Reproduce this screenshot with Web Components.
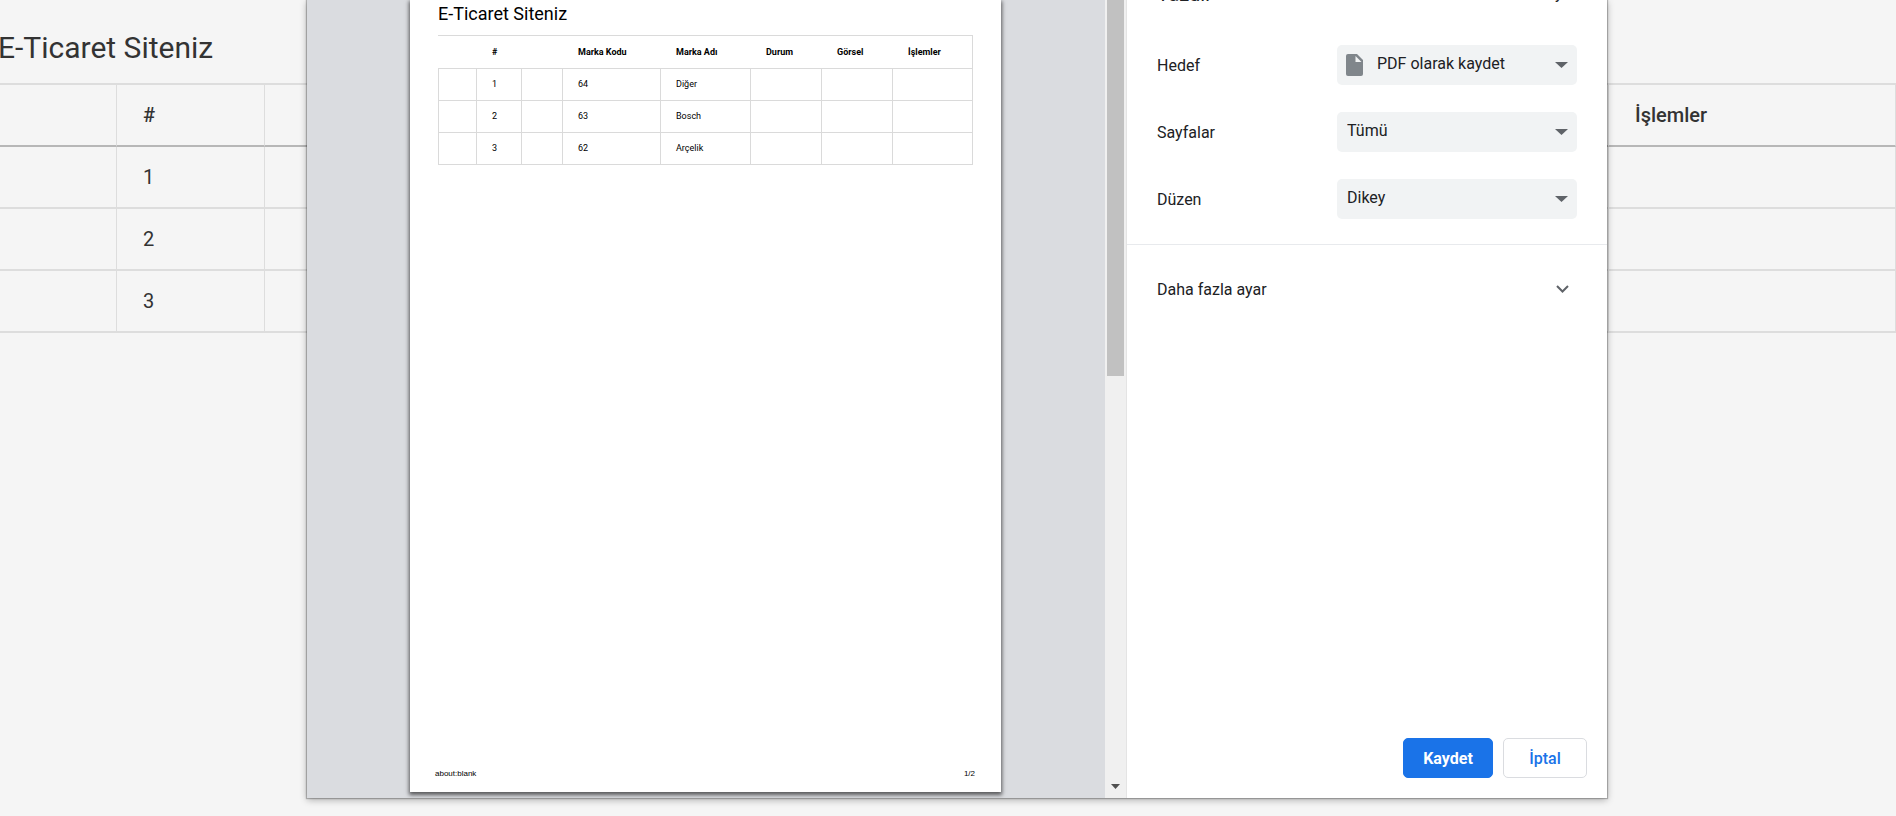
<!DOCTYPE html>
<html lang="tr">
<head>
<meta charset="utf-8">
<title>E-Ticaret Siteniz</title>
<style>
  html, body { margin: 0; height: 100%; overflow: hidden; }
  body { background: #f5f5f5; color: #333; font-family: Roboto, "Liberation Sans", sans-serif; }
</style>
</head>
<body>
<brand-app></brand-app>

<template id="t-app">
  <style>
    :host { display: grid; height: 100vh; overflow: hidden; }
    brand-list, print-dialog { grid-area: 1 / 1; min-width: 0; }
    print-dialog { margin: 0 289px 18px 307px; z-index: 1; }
  </style>
  <brand-list></brand-list>
  <print-dialog>
    <print-preview slot="preview"></print-preview>
    <print-settings slot="settings"></print-settings>
  </print-dialog>
</template>

<template id="t-list">
  <style>
    :host { display: block; }
    h1 { margin: 0 0 0 -2px; padding: 28px 0 15px; font-size: 30px; line-height: 40px; font-weight: 400; }
    table { width: 100%; table-layout: fixed; border-spacing: 0; font-size: 20px; line-height: 24px; }
    th, td { box-sizing: border-box; height: 62px; padding: 0 26px; text-align: left;
      border-right: 1px solid #ddd; border-bottom: 2px solid #ddd; }
    th { height: 64px; font-weight: 500; border-top: 2px solid #ddd; border-bottom-color: #b7b7b7; }
    .select { width: 117px; } .no { width: 148px; } .actions { width: 287px; }
  </style>
  <h1>E-Ticaret Siteniz</h1>
  <table>
    <colgroup><col class="select"><col class="no"><col><col class="actions"></colgroup>
    <thead><tr><th></th><th>#</th><th></th><th>İşlemler</th></tr></thead>
    <tbody>
      <tr><td></td><td>1</td><td></td><td></td></tr>
      <tr><td></td><td>2</td><td></td><td></td></tr>
      <tr><td></td><td>3</td><td></td><td></td></tr>
    </tbody>
  </table>
</template>

<template id="t-dialog">
  <style>
    :host { display: grid; grid-template-columns: minmax(0, 1fr) 481px; background: #fff; color: #202124;
      box-shadow: 0 0 1px 1px rgba(0,0,0,.24), 0 2px 7px rgba(0,0,0,.3); }
    ::slotted(*) { min-height: 0; }
  </style>
  <slot name="preview"></slot>
  <slot name="settings"></slot>
</template>

<template id="t-preview">
  <style>
    :host { display: grid; grid-template-columns: minmax(0, 1fr) 21px; background: #dadce0; overflow: hidden; }
    .page { display: flex; flex-direction: column; justify-content: space-between; margin: 0 104px 6px 103px;
      box-sizing: border-box; padding: 0 28px 12px; background: #fff; color: #000;
      box-shadow: 0 2px 4px 1px rgba(0,0,0,.6); }
    h2 { margin: 0; font-size: 18px; line-height: 28px; font-weight: 400; padding-bottom: 7px; }
    table { width: 100%; table-layout: fixed; border-spacing: 0; font-size: 9px; line-height: 12px; }
    th, td { box-sizing: border-box; height: 32px; padding: 0 0 0 15px; text-align: left;
      border-right: 1px solid #dadada; border-bottom: 1px solid #dadada; }
    td { padding-bottom: 1px; }
    td:first-child { border-left: 1px solid #dadada; }
    th { height: 34px; font-weight: 700; border-top: 1px solid #dadada; border-right: 0; }
    th:last-child { border-right: 1px solid #dadada; }
    .c1 { width: 39px; } .c2 { width: 45px; } .c3 { width: 41px; } .c4 { width: 98px; }
    .c5 { width: 90px; } .c6, .c7 { width: 71px; }
    footer { display: flex; justify-content: space-between; margin: 0 -2px 0 -3px;
      font: 8px/12px "Liberation Sans", Arial, sans-serif; }
  </style>
  <div class="page">
    <section>
      <h2>E-Ticaret Siteniz</h2>
      <table>
        <colgroup><col class="c1"><col class="c2"><col class="c3"><col class="c4"><col class="c5"><col class="c6"><col class="c7"><col></colgroup>
        <thead><tr><th></th><th>#</th><th></th><th>Marka Kodu</th><th>Marka Adı</th><th>Durum</th><th>Görsel</th><th>İşlemler</th></tr></thead>
        <tbody>
          <tr><td></td><td>1</td><td></td><td>64</td><td>Diğer</td><td></td><td></td><td></td></tr>
          <tr><td></td><td>2</td><td></td><td>63</td><td>Bosch</td><td></td><td></td><td></td></tr>
          <tr><td></td><td>3</td><td></td><td>62</td><td>Arçelik</td><td></td><td></td><td></td></tr>
        </tbody>
      </table>
    </section>
    <footer><span>about:blank</span><span>1/2</span></footer>
  </div>
  <scroll-rail></scroll-rail>
</template>

<template id="t-rail">
  <style>
    :host { display: flex; flex-direction: column; justify-content: space-between; align-items: center;
      background: #f0f0f0; padding-bottom: 9px; }
    .thumb { width: 17px; height: 376px; background: #c1c1c1; }
    svg { display: block; }
  </style>
  <div class="thumb"></div>
  <svg width="9" height="5" viewBox="0 0 9 5"><path d="M0 0h9L4.5 5z" fill="#505050"/></svg>
</template>

<template id="t-settings">
  <style>
    :host { display: flex; flex-direction: column; border-left: 1px solid #e4e4e4; background: #fff; font-size: 16px; overflow: hidden; }
    header { display: flex; justify-content: space-between; align-items: center; height: 24px; margin: -18px 30px 39px; line-height: 20px; }
    h2 { margin: 0; font-size: 20px; line-height: 24px; font-weight: 400; }
    .fields { display: grid; gap: 27px; padding: 0 30px 25px; border-bottom: 1px solid #e8eaed; }
    .more { display: flex; justify-content: space-between; align-items: center; height: 88px; padding: 0 38px 0 30px;
      border: 0; background: none; font: inherit; color: inherit; }
    footer { display: flex; justify-content: flex-end; gap: 10px; margin-top: auto; padding: 20px; }
  </style>
  <header><h2>Yazdır</h2><span>2 sayfa</span></header>
  <div class="fields">
    <print-field label="Hedef" value="PDF olarak kaydet" icon></print-field>
    <print-field label="Sayfalar" value="Tümü"></print-field>
    <print-field label="Düzen" value="Dikey"></print-field>
  </div>
  <button class="more" type="button">Daha fazla ayar
    <svg width="13" height="9" viewBox="0 0 13 9"><path d="M1 1l5.500 5.500L12 1" fill="none" stroke="#5f6368" stroke-width="2"/></svg>
  </button>
  <footer>
    <dialog-button primary>Kaydet</dialog-button>
    <dialog-button>İptal</dialog-button>
  </footer>
</template>

<template id="t-field">
  <style>
    :host { display: grid; grid-template-columns: minmax(0, 1fr) 240px; align-items: center; }
    .box { display: grid; align-items: center; }
    .box > * { grid-area: 1 / 1; }
    select { appearance: none; width: 100%; height: 40px; margin: 0; border: 0; border-radius: 5px; padding: 0 30px 3px 10px;
      background: #f1f3f4; color: inherit; font: inherit; }
    :host([icon]) select { padding-left: 40px; }
    svg { pointer-events: none; z-index: 1; }
    .arrow { justify-self: end; margin-right: 9px; }
    .doc { display: none; margin-left: 9px; }
    :host([icon]) .doc { display: block; }
  </style>
  <label for="choice"></label>
  <div class="box">
    <select id="choice"><option></option></select>
    <svg class="doc" width="17" height="22" viewBox="0 0 17 22"><path d="M2 0h9l6 6v14a2 2 0 0 1-2 2H2a2 2 0 0 1-2-2V2a2 2 0 0 1 2-2z" fill="#80868b"/><path d="M9.500 2v6H15.500z" fill="#f1f3f4"/></svg>
    <svg class="arrow" width="13" height="6" viewBox="0 0 13 6"><path d="M0 0h13L6.500 6z" fill="#5f6368"/></svg>
  </div>
</template>

<template id="t-button">
  <style>
    :host { display: block; }
    button { box-sizing: border-box; min-width: 84px; height: 40px; padding: 0 18px; border: 1px solid #dadce0; border-radius: 5px;
      background: #fff; color: #1a73e8; font: inherit; font-weight: 500; }
    :host([primary]) button { min-width: 90px; border-color: #1a73e8; background: #1a73e8; color: #fff; font-weight: 700; }
  </style>
  <button type="button"><slot></slot></button>
</template>

<script>
  class TemplateElement extends HTMLElement {
    constructor() {
      super();
      const source = document.getElementById(this.constructor.template);
      this.attachShadow({ mode: "open" }).append(document.importNode(source.content, true));
    }
  }
  class PrintField extends TemplateElement {
    static template = "t-field";
    connectedCallback() {
      this.shadowRoot.querySelector("label").textContent = this.getAttribute("label");
      this.shadowRoot.querySelector("option").textContent = this.getAttribute("value");
    }
  }
  customElements.define("print-field", PrintField);
  customElements.define("dialog-button", class extends TemplateElement { static template = "t-button"; });
  customElements.define("scroll-rail", class extends TemplateElement { static template = "t-rail"; });
  customElements.define("print-settings", class extends TemplateElement { static template = "t-settings"; });
  customElements.define("print-preview", class extends TemplateElement { static template = "t-preview"; });
  customElements.define("print-dialog", class extends TemplateElement { static template = "t-dialog"; });
  customElements.define("brand-list", class extends TemplateElement { static template = "t-list"; });
  customElements.define("brand-app", class extends TemplateElement { static template = "t-app"; });
</script>
</body>
</html>
